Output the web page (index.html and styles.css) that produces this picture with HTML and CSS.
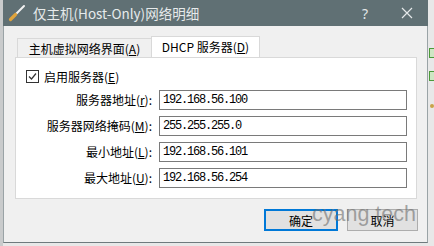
FILE: index.html
```html
<!DOCTYPE html>
<html lang="zh-CN">

<head>
    <meta charset="UTF-8">
    <meta name="viewport" content="width=device-width, initial-scale=1.0">
    <title>仅主机(Host-Only)网络明细</title>
    <link rel="stylesheet" href="styles.css">
</head>

<body>
    <div class="screen">
        <div class="edge edge-left"></div>

        <div class="window">
            <div class="titlebar">
                <svg class="app-icon" width="18" height="18" viewBox="0 0 18 18">
                    <line x1="8" y1="10" x2="16" y2="2" stroke="#f2f2f2" stroke-width="2" stroke-linecap="round" />
                    <line x1="2.5" y1="15.5" x2="7.5" y2="10.5" stroke="#e0a43c" stroke-width="3.2" stroke-linecap="round" />
                </svg>
                <span class="title">仅主机(Host-Only)网络明细</span>
                <span class="tb-btn">?</span>
                <span class="tb-btn">
                    <svg width="12" height="12" viewBox="0 0 12 12">
                        <path d="M1 1 L11 11 M11 1 L1 11" stroke="#e4e8e9" stroke-width="1.2" />
                    </svg>
                </span>
            </div>

            <div class="dialog">
                <div class="tabs">
                    <div class="tab">主机虚拟网络界面(<u>A</u>)</div>
                    <div class="tab active">DHCP 服务器(<u>D</u>)</div>
                </div>

                <div class="panel">
                    <label class="check-row">
                        <span class="checkbox">
                            <svg width="11" height="11" viewBox="0 0 11 11">
                                <path d="M2 5.5 L4.5 8 L9 2.5" fill="none" stroke="#333" stroke-width="1.2" />
                            </svg>
                        </span>
                        启用服务器(<u>E</u>)
                    </label>

                    <div class="fields">
                        <span class="field-label">服务器地址(<u>r</u>):</span>
                        <div class="field">192.168.56.100</div>

                        <span class="field-label">服务器网络掩码(<u>M</u>):</span>
                        <div class="field">255.255.255.0</div>

                        <span class="field-label">最小地址(<u>L</u>):</span>
                        <div class="field">192.168.56.101</div>

                        <span class="field-label">最大地址(<u>U</u>):</span>
                        <div class="field">192.168.56.254</div>
                    </div>
                </div>

                <div class="actions">
                    <button class="btn btn-ok">确定</button>
                    <button class="btn btn-cancel">取消</button>
                    <span class="watermark">cyang tech</span>
                </div>
            </div>
        </div>

        <div class="edge edge-right">
            <span class="bit"></span>
            <span class="bit"></span>
            <span class="dot"></span>
        </div>
    </div>
</body>

</html>
```

FILE: styles.css
```css
/* dialog styles */
body {
    margin: 0;
    padding: 0;
    font-family: "Noto Sans CJK SC", "Noto Sans", sans-serif;
    font-size: 12px;
    color: #000;
    background-color: #e6e6e6;
}

.screen {
    display: flex;
    width: 434px;
    height: 246px;
    overflow: hidden;
    background-color: #e8e8e8;
}

.edge-left {
    width: 3px;
    background-color: #c9cbcc;
}

.edge-right {
    width: 6px;
    display: flex;
    flex-direction: column;
    align-items: flex-end;
    padding-top: 48px;
    gap: 13px;
}

.edge-right .bit {
    width: 4px;
    height: 8px;
    border: 1px solid #4c9a3a;
    border-right: none;
    background-color: #cfe6c4;
}

.edge-right .dot {
    width: 4px;
    height: 4px;
    margin-top: 10px;
    border-radius: 2px;
    background-color: #c9a24a;
}

.window {
    width: 425px;
    height: 243px;
    box-sizing: border-box;
    display: flex;
    flex-direction: column;
    background-color: #f0f0f0;
    border-left: 1px solid #9aa3a6;
    border-right: 1px solid #9aa3a6;
    border-bottom: 1px solid #6f7a7d;
}

.titlebar {
    height: 26px;
    display: flex;
    align-items: center;
    background-color: #607074;
    color: #e6eaeb;
    margin: 0 -1px;
    padding-left: 5px;
}

.app-icon {
    flex: none;
    margin-right: 7px;
}

.title {
    flex: 1;
    font-size: 13.5px;
    white-space: nowrap;
}

.tb-btn {
    width: 42px;
    height: 26px;
    display: flex;
    align-items: center;
    justify-content: center;
    font-family: "Noto Sans", sans-serif;
    font-size: 14px;
    color: #e4e8e9;
}

.dialog {
    flex: 1;
    display: flex;
    flex-direction: column;
    padding: 10px 9px 0 11px;
}

.tabs {
    height: 21px;
    display: flex;
    align-items: flex-end;
    padding-left: 2px;
}

.tab {
    height: 19px;
    box-sizing: border-box;
    width: 135px;
    display: flex;
    align-items: center;
    justify-content: center;
    border: 1px solid #d9d9d9;
    border-bottom: none;
    background-color: #f0f0f0;
    white-space: nowrap;
}

.tab.active {
    height: 21px;
    width: 109px;
    margin-left: -1px;
    background-color: #fff;
    padding-bottom: 2px;
}

.panel {
    height: 142px;
    box-sizing: border-box;
    margin-right: 1px;
    background-color: #fff;
    border: 1px solid #d9d9d9;
    padding: 12px 9px 0 0;
}

.check-row {
    display: flex;
    align-items: center;
    height: 13px;
    padding-left: 10px;
    white-space: nowrap;
}

.checkbox {
    width: 13px;
    height: 13px;
    box-sizing: border-box;
    border: 1px solid #333;
    display: flex;
    align-items: center;
    justify-content: center;
    margin-right: 5px;
}

.fields {
    display: grid;
    grid-template-columns: 136px 1fr;
    column-gap: 7px;
    row-gap: 6px;
    margin-top: 7px;
}

.field-label {
    text-align: right;
    line-height: 20px;
    white-space: nowrap;
}

.field {
    height: 20px;
    box-sizing: border-box;
    border: 1px solid #7a7a7a;
    padding-left: 3px;
    font-family: "Liberation Mono", monospace;
    font-size: 12px;
    letter-spacing: -1.2px;
    line-height: 18px;
}

.actions {
    position: relative;
    display: flex;
    justify-content: flex-end;
    gap: 9px;
    margin-top: 10px;
}

.btn {
    height: 22px;
    padding: 0;
    font-family: "Noto Sans CJK SC", sans-serif;
    font-size: 12px;
    color: #000;
    background-color: #e1e1e1;
    border: 1px solid #adadad;
}

.btn-ok {
    width: 74px;
    border-color: #0078d7;
    box-shadow: inset 0 0 0 1px #0078d7;
}

.btn-cancel {
    width: 71px;
}

.watermark {
    position: absolute;
    right: 2px;
    top: -7px;
    font-family: "Liberation Sans", sans-serif;
    font-size: 21.5px;
    color: rgba(110, 110, 110, 0.6);
    white-space: nowrap;
    pointer-events: none;
}
```
